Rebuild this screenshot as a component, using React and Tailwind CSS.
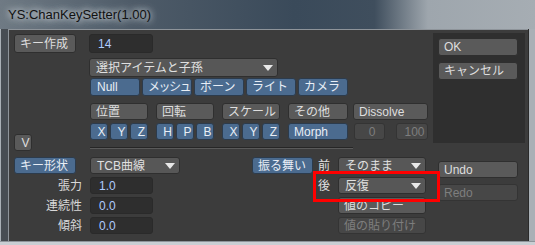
import React from "react";

const FONT = "font-['Liberation_Sans','Noto_Sans_CJK_JP',sans-serif]";

function Arrow() {
  return (
    <svg width="10" height="6" viewBox="0 0 10 6" className="shrink-0">
      <polygon points="0,0 10,0 5,6" fill="#e8e8e8" />
    </svg>
  );
}

const BASE = "flex shrink-0 items-center whitespace-nowrap rounded-[3px] border pl-[5px] text-[12px] leading-none ";

function Gray({ className = "", children }) {
  return (
    <div className={BASE + "border-[#2f2f2f] bg-[#5a5a5a] text-[#dedede] " + className}>
      {children}
    </div>
  );
}

function Blue({ className = "", children }) {
  return (
    <div className={BASE + "border-[#2c3b4c] bg-[#4b6b8f] text-[#e8eef6] " + className}>
      {children}
    </div>
  );
}

function Dis({ className = "", children }) {
  return (
    <div className={BASE + "border-[#343434] bg-[#474747] text-[#7e7e7e] " + className}>
      {children}
    </div>
  );
}

function Field({ className = "", children }) {
  return (
    <div
      className={
        "flex shrink-0 items-center rounded-[3px] border border-[#2a2a2a] bg-[#2e2e2e] pl-[8px] text-[12px] leading-none text-[#aecbff] " +
        className
      }
    >
      {children}
    </div>
  );
}

function Drop({ className = "", children }) {
  return (
    <div
      className={
        "flex shrink-0 items-center justify-between whitespace-nowrap rounded-[3px] border border-[#2f2f2f] bg-[#575757] pl-[6px] pr-[4px] text-[12px] leading-none text-[#e0e0e0] " +
        className
      }
    >
      <span>{children}</span>
      <Arrow />
    </div>
  );
}

export default function App() {
  return (
    <div
      className={
        "flex h-[245px] w-[535px] flex-col overflow-hidden bg-[linear-gradient(90deg,#6f7a84_0%,#4e5b68_25%,#3a4a5a_55%,#3f4e5d_70%,#9ea6ad_80%,#a6adb3_100%)] " +
        FONT
      }
    >
      {/* title bar */}
      <div className="flex h-[29px] items-center pl-[8px]">
        <span className="text-[13px] text-[#111] [text-shadow:0_0_6px_rgba(235,240,245,0.95),0_0_10px_rgba(235,240,245,0.8)]">
          YS:ChanKeySetter(1.00)
        </span>
      </div>

      {/* body */}
      <div className="flex h-[212px]">
        <div className="w-[8px] border-l border-[#a9b0b6] bg-[#474d53]" />
        <div className="relative flex h-[212px] w-[520px] border-l border-t border-[#8e949a] bg-[#3c3c3c]">
          {/* main column */}
          <div className="flex w-[424px] flex-col">
            {/* top section */}
            <div className="flex h-[127px]">
              <div className="flex w-[80px] flex-col pl-[5px]">
                <Gray className="mt-[4px] h-[19px] w-[62px]">キー作成</Gray>
                <Gray className="mt-[81px] h-[17px] w-[18px] justify-center pl-0">V</Gray>
              </div>
              <div className="flex flex-col">
                <Field className="mt-[4px] h-[19px] w-[64px]">14</Field>
                <Drop className="mt-[5px] h-[19px] w-[189px]">選択アイテムと子孫</Drop>
                <div className="ml-[1px] mt-[1px] flex h-[18px] gap-[2px]">
                  <Blue className="w-[50px] pl-[6px]">Null</Blue>
                  <Blue className="w-[50px] pl-[4px] tracking-[-1.5px]">メッシュ</Blue>
                  <Blue className="w-[50px] pl-[4px]">ボーン</Blue>
                  <Blue className="w-[50px] pl-[4px]">ライト</Blue>
                  <Blue className="w-[50px] pl-[4px]">カメラ</Blue>
                </div>
                <div className="ml-[1px] mt-[7px] flex h-[17px]">
                  <Gray className="w-[58px]">位置</Gray>
                  <Gray className="ml-[8px] w-[58px]">回転</Gray>
                  <Gray className="ml-[8px] w-[58px]">スケール</Gray>
                  <Gray className="ml-[8px] w-[60px]">その他</Gray>
                  <Gray className="ml-[5px] w-[75px]">Dissolve</Gray>
                </div>
                <div className="ml-[1px] mt-[3px] flex h-[17px]">
                  <Blue className="w-[18px] justify-center pl-0">X</Blue>
                  <Blue className="ml-[2px] w-[18px] justify-center pl-0">Y</Blue>
                  <Blue className="ml-[2px] w-[18px] justify-center pl-0">Z</Blue>
                  <Blue className="ml-[8px] w-[18px] justify-center pl-0">H</Blue>
                  <Blue className="ml-[2px] w-[18px] justify-center pl-0">P</Blue>
                  <Blue className="ml-[2px] w-[18px] justify-center pl-0">B</Blue>
                  <Blue className="ml-[8px] w-[18px] justify-center pl-0">X</Blue>
                  <Blue className="ml-[2px] w-[18px] justify-center pl-0">Y</Blue>
                  <Blue className="ml-[2px] w-[18px] justify-center pl-0">Z</Blue>
                  <Blue className="ml-[8px] w-[60px]">Morph</Blue>
                  <Dis className="ml-[6px] w-[31px] justify-center pl-0">0</Dis>
                  <Dis className="ml-[11px] w-[32px] justify-center pl-0">100</Dis>
                </div>
                <div className="ml-[1px] mt-[7px] h-[2px] w-[263px] border-t border-b border-t-[#262626] border-b-[#5a5a5a]" />
              </div>
            </div>

            {/* bottom section */}
            <div className="flex flex-col">
              <div className="flex h-[17px]">
                <Blue className="ml-[5px] w-[62px]">キー形状</Blue>
                <Drop className="ml-[14px] w-[90px]">TCB曲線</Drop>
                <Blue className="ml-[72px] w-[61px]">振る舞い</Blue>
                <div className="flex w-[25px] items-center pl-[5px] text-[12px] text-[#e0e0e0]">前</div>
                <Drop className="w-[88px]">そのまま</Drop>
              </div>
              <div className="mt-[3px] flex h-[17px]">
                <div className="flex w-[73px] items-center justify-end text-[12px] text-[#d8d8d8]">張力</div>
                <Field className="ml-[8px] w-[63px]">1.0</Field>
                <div className="ml-[160px] flex w-[25px] items-center pl-[5px] text-[12px] text-[#e0e0e0]">後</div>
                <Drop className="w-[88px]">反復</Drop>
              </div>
              <div className="mt-[3px] flex h-[17px]">
                <div className="flex w-[73px] items-center justify-end text-[12px] text-[#d8d8d8]">連続性</div>
                <Field className="ml-[8px] w-[63px]">0.0</Field>
                <Gray className="ml-[185px] w-[88px]">値のコピー</Gray>
              </div>
              <div className="mt-[3px] flex h-[17px]">
                <div className="flex w-[73px] items-center justify-end text-[12px] text-[#d8d8d8]">傾斜</div>
                <Field className="ml-[8px] w-[63px]">0.0</Field>
                <Dis className="ml-[185px] w-[88px]">値の貼り付け</Dis>
              </div>
            </div>
          </div>

          {/* right column */}
          <div className="flex w-[92px] flex-col">
            <div className="mt-[3px] flex h-[110px] w-[92px] flex-col bg-[#2f2f2f] pl-[5px]">
              <Gray className="mt-[5px] h-[18px] w-[80px]">OK</Gray>
              <Gray className="mt-[6px] h-[18px] w-[80px]">キャンセル</Gray>
            </div>
            <Gray className="ml-[5px] mt-[18px] h-[17px] w-[80px]">Undo</Gray>
            <Dis className="ml-[5px] mt-[6px] h-[17px] w-[80px]">Redo</Dis>
          </div>

          {/* annotation */}
          <div className="absolute left-[304px] top-[141px] h-[31px] w-[127px] border-[3px] border-[#ff0000]" />
        </div>
        <div className="w-[7px] border-l border-[#2a2a2a] bg-[#a9b0b6]" />
      </div>
      <div className="h-[4px] border-t border-[#8e949a] bg-[#c9ced3]" />
    </div>
  );
}
